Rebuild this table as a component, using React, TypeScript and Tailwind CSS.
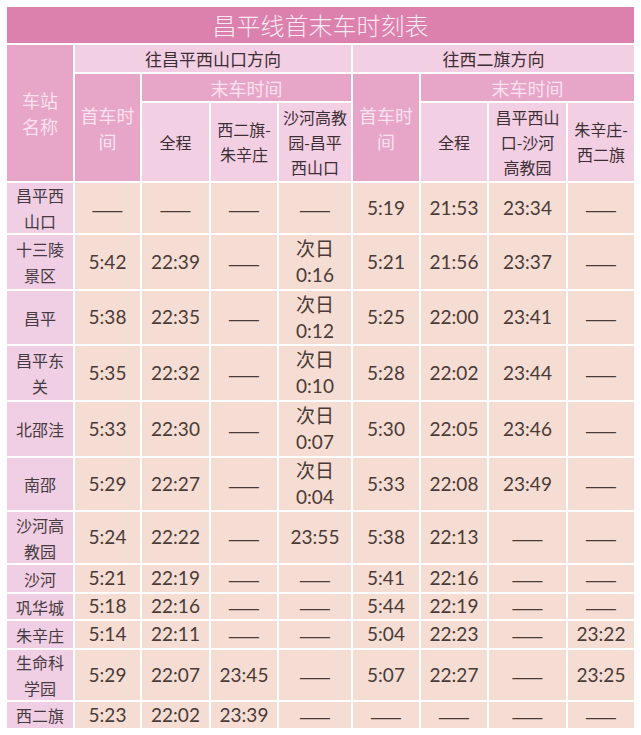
const CJK = "font-['Noto_Sans_CJK_SC',sans-serif]"
const NUM = "font-['Lato','Noto_Sans_CJK_SC',sans-serif]"

type Cell = string | string[]

const ROWS: Cell[][] = [
  [['昌平西', '山口'], '——', '——', '——', '——', '5:19', '21:53', '23:34', '——'],
  [['十三陵', '景区'], '5:42', '22:39', '——', ['次日', '0:16'], '5:21', '21:56', '23:37', '——'],
  [['昌平'], '5:38', '22:35', '——', ['次日', '0:12'], '5:25', '22:00', '23:41', '——'],
  [['昌平东', '关'], '5:35', '22:32', '——', ['次日', '0:10'], '5:28', '22:02', '23:44', '——'],
  [['北邵洼'], '5:33', '22:30', '——', ['次日', '0:07'], '5:30', '22:05', '23:46', '——'],
  [['南邵'], '5:29', '22:27', '——', ['次日', '0:04'], '5:33', '22:08', '23:49', '——'],
  [['沙河高', '教园'], '5:24', '22:22', '——', '23:55', '5:38', '22:13', '——', '——'],
  [['沙河'], '5:21', '22:19', '——', '——', '5:41', '22:16', '——', '——'],
  [['巩华城'], '5:18', '22:16', '——', '——', '5:44', '22:19', '——', '——'],
  [['朱辛庄'], '5:14', '22:11', '——', '——', '5:04', '22:23', '——', '23:22'],
  [['生命科', '学园'], '5:29', '22:07', '23:45', '——', '5:07', '22:27', '——', '23:25'],
  [['西二旗'], '5:23', '22:02', '23:39', '——', '——', '——', '——', '——'],
]

function Lines({ lines }: { lines: string[] }) {
  return (
    <>
      {lines.map((l, i) => (
        <span key={i} className="block">
          {l}
        </span>
      ))}
    </>
  )
}

function DataCell({ value }: { value: Cell }) {
  if (Array.isArray(value)) {
    return (
      <div className={`bg-[#f5ddd4] flex flex-col items-center justify-center text-[#4a3a36] ${NUM} text-[19px] leading-[26px]`}>
        <span>{value[0]}</span>
        <span>{value[1]}</span>
      </div>
    )
  }
  if (value === '——') {
    return (
      <div className="bg-[#f5ddd4] flex items-center justify-center">
        <span className={`${CJK} text-[19px] leading-none text-[#4a3a36]`}>——</span>
      </div>
    )
  }
  return (
    <div className={`bg-[#f5ddd4] flex items-center justify-center text-[#4a3a36] ${NUM} text-[19px]`}>
      {value}
    </div>
  )
}

export default function App() {
  const dark = `bg-[#e7a6c8] text-[#fbe2ee] ${CJK} text-[18px] leading-[26px] flex flex-col items-center justify-center text-center`
  const light = `bg-[#f3cfe3] text-[#3b2e34] ${CJK} text-[16px] leading-[25px] flex flex-col items-center justify-center text-center`

  return (
    <div className="min-h-screen bg-white pt-[7px] pl-[7px]">
      <div className="grid gap-[2px] bg-white w-fit grid-cols-[66px_65px_67px_66px_72px_66px_66px_77px_66px] grid-rows-[36px_27px_27px_78px_50px_54px_53px_54px_54px_52px_51px_27px_25px_27px_50px_26px]">
        <div className={`col-span-9 bg-[#dc80ad] flex items-center justify-center text-[#fde9f3] ${CJK} text-[24px] font-light`}>
          昌平线首末车时刻表
        </div>

        <div className={`row-span-3 ${dark}`}>
          <Lines lines={['车站', '名称']} />
        </div>
        <div className={`col-span-4 ${light} text-[17px]`}>往昌平西山口方向</div>
        <div className={`col-span-4 ${light} text-[17px]`}>往西二旗方向</div>

        <div className={`row-span-2 ${dark}`}>
          <Lines lines={['首车时', '间']} />
        </div>
        <div className={`col-span-3 ${dark}`}>末车时间</div>
        <div className={`row-span-2 ${dark}`}>
          <Lines lines={['首车时', '间']} />
        </div>
        <div className={`col-span-3 ${dark}`}>末车时间</div>

        <div className={light}>全程</div>
        <div className={light}>
          <Lines lines={['西二旗-', '朱辛庄']} />
        </div>
        <div className={light}>
          <Lines lines={['沙河高教', '园-昌平', '西山口']} />
        </div>
        <div className={light}>全程</div>
        <div className={light}>
          <Lines lines={['昌平西山', '口-沙河', '高教园']} />
        </div>
        <div className={light}>
          <Lines lines={['朱辛庄-', '西二旗']} />
        </div>

        {ROWS.map((row, r) =>
          row.map((cell, c) =>
            c === 0 ? (
              <div
                key={`${r}-${c}`}
                className={`bg-[#f0cfe4] text-[#453a40] ${CJK} text-[16px] leading-[26px] flex flex-col items-center justify-center text-center`}
              >
                <Lines lines={cell as string[]} />
              </div>
            ) : (
              <DataCell key={`${r}-${c}`} value={cell} />
            ),
          ),
        )}
      </div>
    </div>
  )
}
